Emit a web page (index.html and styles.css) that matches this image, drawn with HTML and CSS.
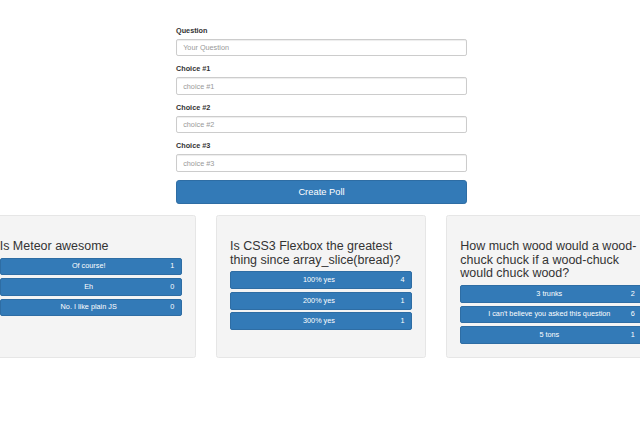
FILE: index.html
```html
<!DOCTYPE html>
<html>
<head>
<meta charset="utf-8">
<title>Polls</title>
<link rel="stylesheet" href="styles.css">
</head>
<body>
<div class="form-wrap">
  <form class="poll-form">
    <div class="form-group">
      <label class="lbl">Question</label>
      <input class="field" type="text" placeholder="Your Question">
    </div>
    <div class="form-group">
      <label class="lbl">Choice #1</label>
      <input class="field" type="text" placeholder="choice #1">
    </div>
    <div class="form-group">
      <label class="lbl">Choice #2</label>
      <input class="field" type="text" placeholder="choice #2">
    </div>
    <div class="form-group">
      <label class="lbl">Choice #3</label>
      <input class="field" type="text" placeholder="choice #3">
    </div>
    <button class="create-btn" type="button">Create Poll</button>
  </form>
</div>
<div class="polls">
  <div class="poll">
    <h3 class="poll-title">Is Meteor awesome</h3>
    <div class="choice"><span class="choice-text">Of course!</span><span class="count">1</span></div>
    <div class="choice"><span class="choice-text">Eh</span><span class="count">0</span></div>
    <div class="choice"><span class="choice-text">No. I like plain JS</span><span class="count">0</span></div>
  </div>
  <div class="poll">
    <h3 class="poll-title">Is CSS3 Flexbox the greatest thing since array_slice(bread)?</h3>
    <div class="choice"><span class="choice-text">100% yes</span><span class="count">4</span></div>
    <div class="choice"><span class="choice-text">200% yes</span><span class="count">1</span></div>
    <div class="choice"><span class="choice-text">300% yes</span><span class="count">1</span></div>
  </div>
  <div class="poll">
    <h3 class="poll-title">How much wood would a wood-chuck chuck if a wood-chuck would chuck wood?</h3>
    <div class="choice"><span class="choice-text">3 trunks</span><span class="count">2</span></div>
    <div class="choice"><span class="choice-text">I can't believe you asked this question</span><span class="count">6</span></div>
    <div class="choice"><span class="choice-text">5 tons</span><span class="count">1</span></div>
  </div>
</div>
</body>
</html>
```
FILE: styles.css
```css
html, body {
  margin: 0;
  padding: 0;
  background: #fff;
  overflow: hidden;
}
body {
  font-family: "Liberation Sans", Arial, sans-serif;
  color: #333;
  font-size: 7.28px;
  line-height: 1.42857;
}
.form-wrap {
  display: flex;
  justify-content: center;
  padding: 25.8px 0 0 3px;
}
.poll-form {
  width: 291px;
  margin: 0;
}
.form-group {
  margin-bottom: 7.8px;
}
.lbl {
  display: block;
  font-weight: bold;
  font-size: 7.28px;
  line-height: 10.4px;
  margin-bottom: 2.6px;
  color: #333;
}
.field {
  display: block;
  box-sizing: border-box;
  width: 100%;
  height: 17.7px;
  padding: 3.1px 6.2px;
  font-family: "Liberation Sans", Arial, sans-serif;
  font-size: 7.28px;
  color: #555;
  background: #fff;
  border: 1px solid #ccc;
  border-radius: 2.1px;
  box-shadow: inset 0 1px 1px rgba(0,0,0,.075);
  outline: none;
}
.field::placeholder {
  color: #999;
}
.create-btn {
  display: block;
  box-sizing: border-box;
  width: 100%;
  height: 24px;
  margin-top: 7px;
  padding: 0;
  font-family: "Liberation Sans", Arial, sans-serif;
  font-size: 9.36px;
  color: #fff;
  background: #337ab7;
  border: 1px solid #2e6da4;
  border-radius: 3.1px;
}
.polls {
  display: flex;
  justify-content: center;
  align-items: stretch;
  gap: 20.3px;
  margin-top: 11.7px;
  padding-left: 2px;
}
.poll {
  flex: 0 0 auto;
  width: 210px;
  box-sizing: border-box;
  padding: 0 13px 13px;
  background: #f4f4f4;
  border: 1px solid #e6e6e6;
  border-radius: 2.5px;
}
.poll-title {
  margin: 23.4px 0 4.2px;
  font-size: 12.48px;
  font-weight: normal;
  line-height: 1.1;
  color: #333;
}
.choice {
  display: flex;
  align-items: center;
  box-sizing: border-box;
  height: 17.7px;
  margin-bottom: 2.8px;
  padding: 0 6.5px;
  background: #337ab7;
  border: 1px solid #2e6da4;
  border-radius: 2px;
  color: #fff;
  font-size: 7.28px;
}
.choice:last-child {
  margin-bottom: 0;
}
.choice-text {
  flex: 1 1 auto;
  text-align: center;
  white-space: nowrap;
}
.count {
  flex: 0 0 auto;
}
```
